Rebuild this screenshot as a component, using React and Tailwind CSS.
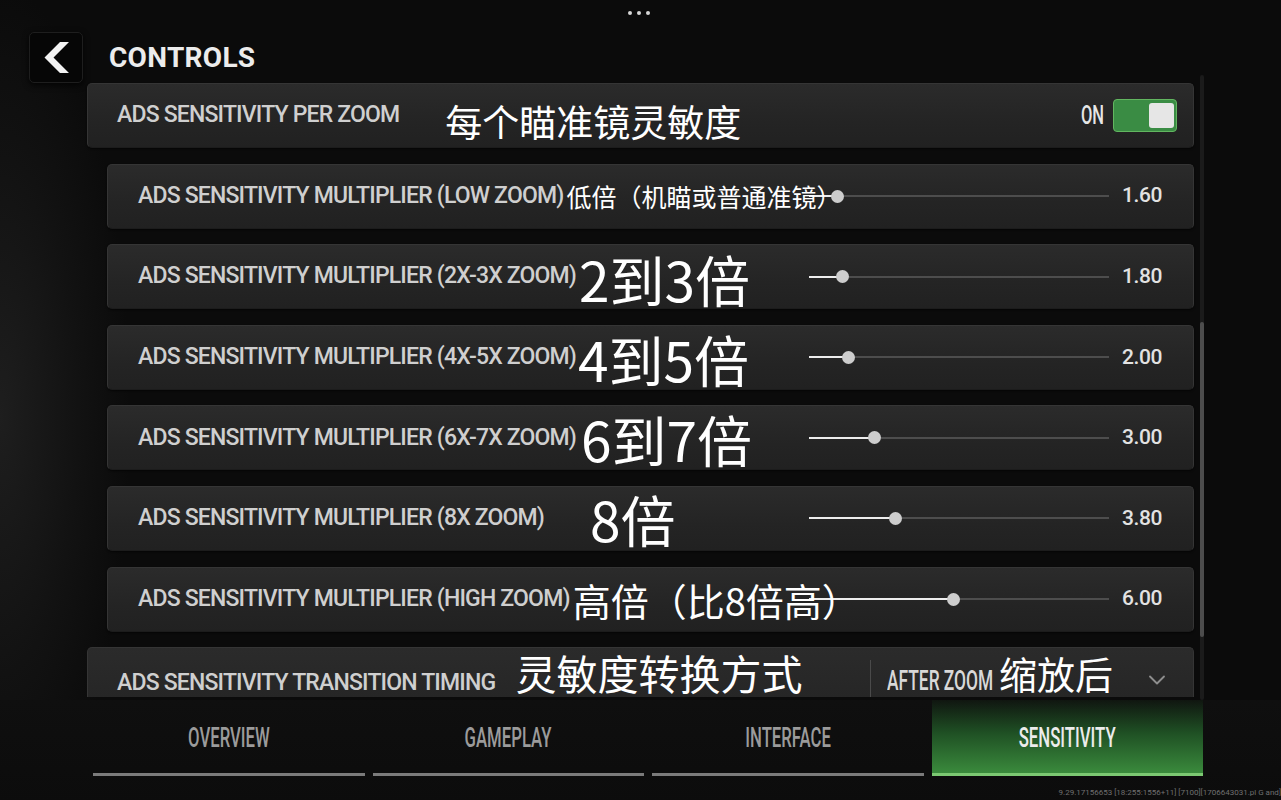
import React from "react";
import { ChevronDown } from "lucide-react";

const rows = [
  { label: "ADS SENSITIVITY MULTIPLIER (LOW ZOOM)", note: "低倍（机瞄或普通准镜）", size: "text-[25px]", gap: "ml-[3px]", shift: "mt-[0px]", pos: 28, value: "1.60" },
  { label: "ADS SENSITIVITY MULTIPLIER (2X-3X ZOOM)", note: "2到3倍", size: "text-[55px]", gap: "ml-[3px]", shift: "mt-[3px]", pos: 33, value: "1.80" },
  { label: "ADS SENSITIVITY MULTIPLIER (4X-5X ZOOM)", note: "4到5倍", size: "text-[55px]", gap: "ml-[2px]", shift: "mt-[3px]", pos: 39, value: "2.00" },
  { label: "ADS SENSITIVITY MULTIPLIER (6X-7X ZOOM)", note: "6到7倍", size: "text-[55px]", gap: "ml-[5px]", shift: "mt-[2px]", pos: 65, value: "3.00" },
  { label: "ADS SENSITIVITY MULTIPLIER (8X ZOOM)", note: "8倍", size: "text-[55px]", gap: "ml-[46px]", shift: "mt-[0px]", pos: 86, value: "3.80" },
  { label: "ADS SENSITIVITY MULTIPLIER (HIGH ZOOM)", note: "高倍（比8倍高）", size: "text-[38px]", gap: "ml-[3px]", shift: "mt-[1px]", pos: 144, value: "6.00" },
];

const rowBox =
  "rounded-[5px] border border-[#353535] border-b-[#1c1c1c] bg-[linear-gradient(180deg,#2b2b2b_0%,#242424_60%,#212121_100%)] shadow-[0_1px_2px_rgba(0,0,0,0.6)]";

const latin = "font-['Roboto',sans-serif]";
const cjk = "font-['Noto_Sans_CJK_SC',sans-serif]";
const labelCls = `${latin} font-medium text-[23px] tracking-[-0.82px] text-[#cfcfcf] whitespace-nowrap`;

function Slider({ pos }) {
  return (
    <div className="relative w-[300px] h-[14px] shrink-0 flex items-center">
      <div className="h-[2px] w-full bg-[#4d4d4d]" />
      <div className="absolute left-0 top-[6px] h-[2px] bg-[#ededed]" style={{ width: pos }} />
      <div
        className="absolute top-[0.5px] w-[13px] h-[13px] rounded-full bg-[#cdcdcd]"
        style={{ left: pos - 6.5 }}
      />
    </div>
  );
}

function SliderRow({ r }) {
  return (
    <div className={`${rowBox} ml-[20px] h-[65px] shrink-0 flex items-center pl-[30px] pr-[31px]`}>
      <div className="flex-1 min-w-0 flex items-center whitespace-nowrap relative z-10">
        <span className={labelCls}>{r.label}</span>
        <span className={`${cjk} ${r.size} ${r.gap} ${r.shift} leading-none text-white`}>{r.note}</span>
      </div>
      <Slider pos={r.pos} />
      <div className={`${latin} w-[53px] text-right text-[21px] font-medium tracking-[-0.4px] text-[#e2e2e2]`}>{r.value}</div>
    </div>
  );
}

export default function App() {
  return (
    <div className="relative w-[1281px] h-[800px] overflow-hidden bg-[#0b0b0b] bg-[radial-gradient(ellipse_130px_430px_at_0%_52%,#1e1e1e_0%,#121212_60%,#0b0b0b_100%)]">
      {/* top dots */}
      <div className="absolute top-[11px] left-[628px] flex gap-[5px]">
        <div className="w-[4px] h-[4px] rounded-full bg-[#d6d6d6]" />
        <div className="w-[4px] h-[4px] rounded-full bg-[#d6d6d6]" />
        <div className="w-[4px] h-[4px] rounded-full bg-[#d6d6d6]" />
      </div>

      <div className="pt-[32px]">
        {/* header */}
        <div className="flex items-center pl-[29px] h-[51px]">
          <div className="w-[54px] h-[51px] rounded-[5px] bg-[#060606] border border-[#1e1e1e] shadow-[0_2px_6px_rgba(0,0,0,0.8)] flex items-center justify-center">
            <svg width="25" height="31" viewBox="0 0 25 31">
              <polygon points="16,0 25,0 9.5,15.5 25,31 16,31 0.5,15.5" fill="#f2f2f2" />
            </svg>
          </div>
          <div className={`${latin} ml-[26px] text-[28px] font-bold tracking-[0.3px] text-[#ececec] leading-none`}>CONTROLS</div>
        </div>

        {/* list + scrollbar */}
        <div className="flex">
          <div className="ml-[87px] w-[1107px] h-[614px] flex flex-col gap-[15.6px]">
            {/* row 1 */}
            <div className={`${rowBox} h-[65px] shrink-0 flex items-center pl-[29px] pr-[16px]`}>
              <span className={labelCls}>ADS SENSITIVITY PER ZOOM</span>
              <span className={`${cjk} text-[37px] ml-[46px] mt-[12px] leading-none text-white whitespace-nowrap`}>每个瞄准镜灵敏度</span>
              <div className="ml-auto flex items-center">
                <span className={`${latin} inline-block scale-x-[0.66] text-[25px] font-medium text-[#e6e6e6] leading-none mr-[3px]`}>ON</span>
                <div className="w-[64px] h-[33px] rounded-[4px] bg-[#3a8c44] border-[1.5px] border-[#62b660] flex items-center justify-end pr-[2px]">
                  <div className="w-[25px] h-[25px] rounded-[3px] bg-[#e6e6e6]" />
                </div>
              </div>
            </div>

            {rows.map((r, i) => (
              <SliderRow key={i} r={r} />
            ))}

            {/* row 8 (its lower part is hidden by the tab bar) */}
            <div className="h-[50px] shrink-0 flex items-start pl-[29px] rounded-t-[5px] border border-b-0 border-[#353535] bg-[linear-gradient(180deg,#2b2b2b_0%,#262626_100%)]">
              <span className={`${labelCls} mt-[18px]`}>ADS SENSITIVITY TRANSITION TIMING</span>
              <span className={`${cjk} text-[41px] ml-[20px] mt-[4px] leading-none text-white whitespace-nowrap`}>灵敏度转换方式</span>
              <div className="ml-auto w-[323px] h-full flex items-start">
                <div className="w-px h-[37px] mt-[12px] bg-[#4a4a4a]" />
                <span className={`${latin} inline-block origin-left scale-x-[0.62] text-[28px] font-medium text-[#d8d8d8] leading-none ml-[16px] mt-[19px] w-[66px] whitespace-nowrap`}>AFTER ZOOM</span>
                <span className={`${cjk} text-[38px] ml-[46px] mt-[6px] leading-none text-white whitespace-nowrap`}>缩放后</span>
                <ChevronDown className="ml-auto mr-[22px] mt-[18px]" size={28} strokeWidth={1.6} color="#8d8d8d" />
              </div>
            </div>
          </div>
          {/* scrollbar */}
          <div className="ml-[6px] mt-[-8px] w-[4px] h-[625px] bg-[#1b1b1b] rounded-full flex flex-col">
            <div className="mt-[247px] h-[315px] w-[4px] rounded-full bg-[#4d4d4d]" />
          </div>
        </div>

        {/* tab bar */}
        <div className="relative z-10 h-[103px] bg-[linear-gradient(180deg,#0f0f0f,#0c0c0c)]">
          <div className="ml-[93px] w-[1110px] grid grid-cols-4 gap-[8px] h-[76px]">
            {["OVERVIEW", "GAMEPLAY", "INTERFACE"].map((t) => (
              <div key={t} className="flex items-center justify-center border-b-[3px] border-[#7b7b7b] pt-[4px]">
                <span className={`${latin} inline-block scale-x-[0.62] text-[27px] font-medium text-[#9b9b9b] leading-none`}>{t}</span>
              </div>
            ))}
            <div className="flex items-center justify-center border-b-[3px] border-[#7cc872] bg-[linear-gradient(180deg,rgba(20,50,22,0.2)_0%,#1f5024_45%,#3a8a3c_100%)] pt-[4px]">
              <span className={`${latin} inline-block scale-x-[0.62] text-[27px] font-medium text-[#ececec] leading-none`}>SENSITIVITY</span>
            </div>
          </div>
        </div>
      </div>

      <div className={`absolute z-20 right-[0px] bottom-[3px] ${latin} text-[8px] text-[#707070] whitespace-nowrap leading-none`}>
        9.29.17156653 [18:255:1556+11] [7100][1706643031.pl G and]
      </div>
    </div>
  );
}
